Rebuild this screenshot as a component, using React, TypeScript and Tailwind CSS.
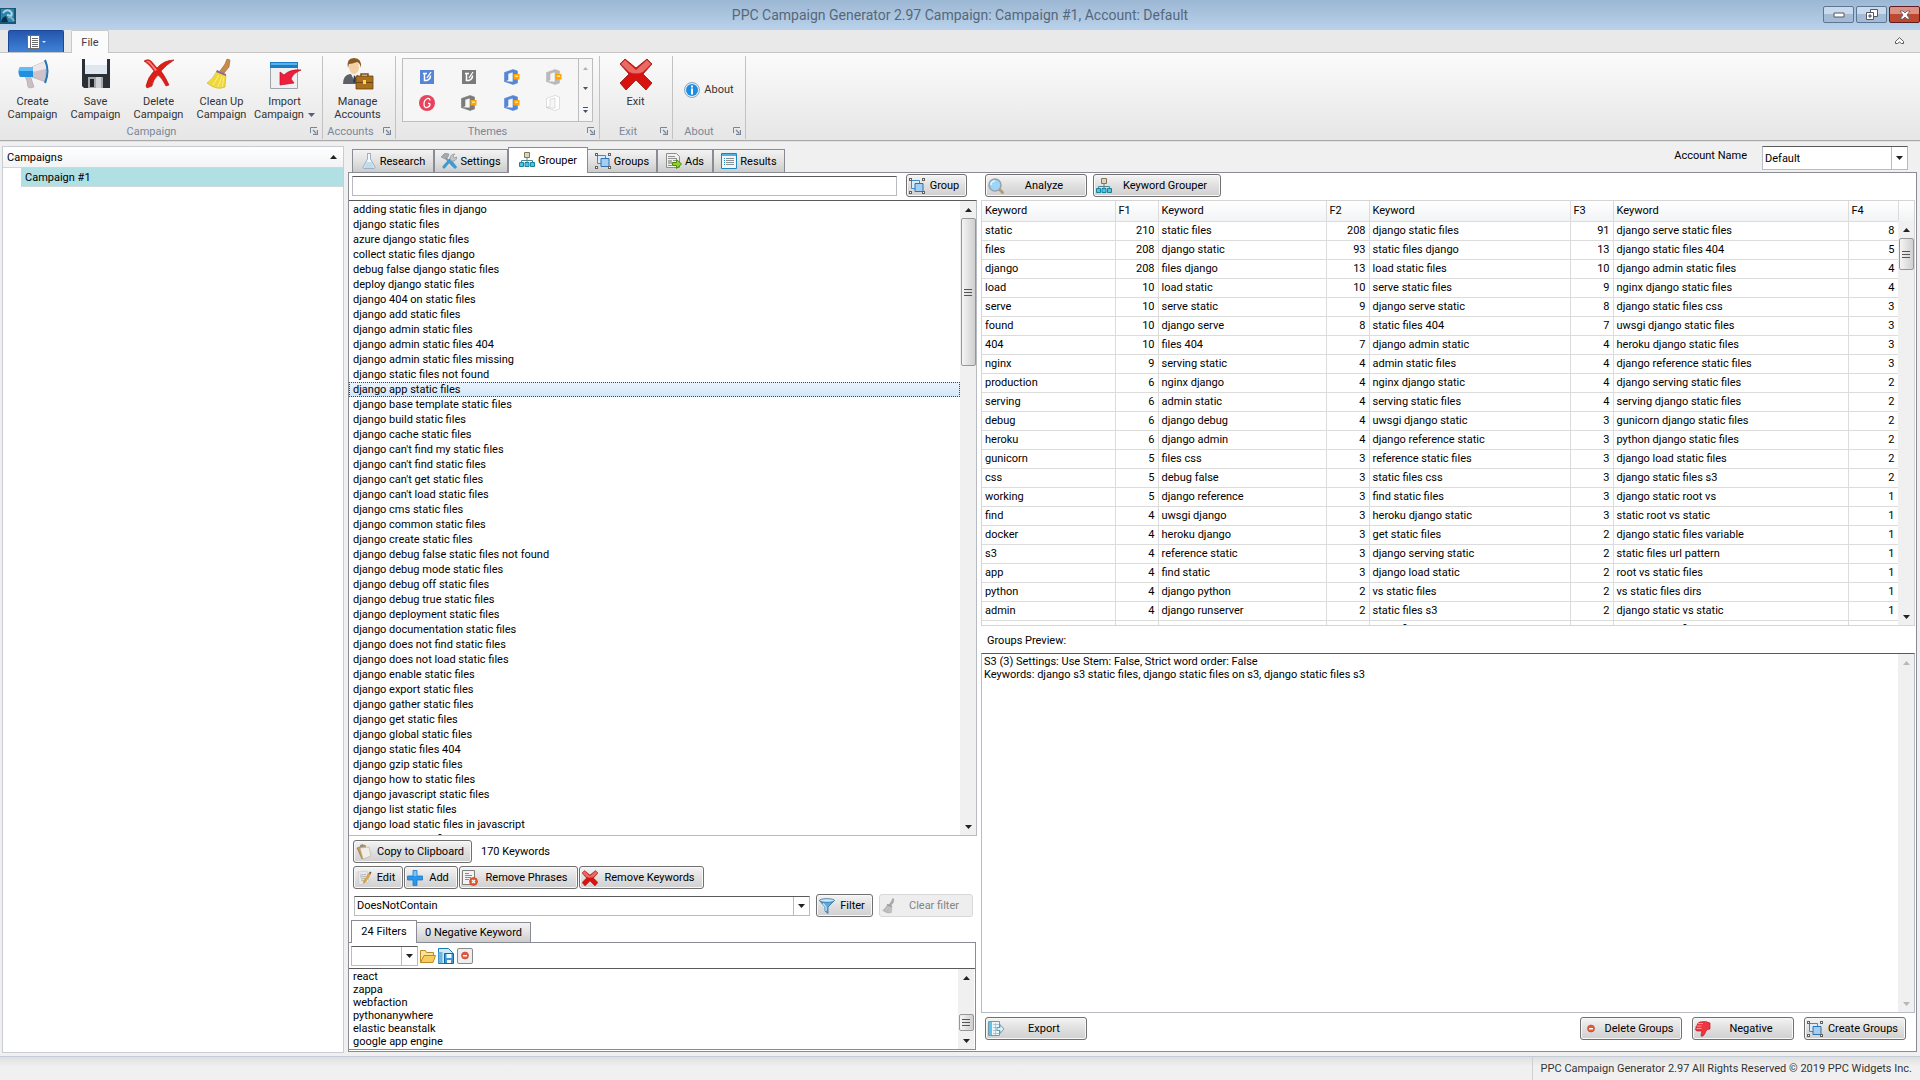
import type { ReactNode } from "react";

const keywords = [
  "adding static files in django",
  "django static files",
  "azure django static files",
  "collect static files django",
  "debug false django static files",
  "deploy django static files",
  "django 404 on static files",
  "django add static files",
  "django admin static files",
  "django admin static files 404",
  "django admin static files missing",
  "django static files not found",
  "django app static files",
  "django base template static files",
  "django build static files",
  "django cache static files",
  "django can't find my static files",
  "django can't find static files",
  "django can't get static files",
  "django can't load static files",
  "django cms static files",
  "django common static files",
  "django create static files",
  "django debug false static files not found",
  "django debug mode static files",
  "django debug off static files",
  "django debug true static files",
  "django deployment static files",
  "django documentation static files",
  "django does not find static files",
  "django does not load static files",
  "django enable static files",
  "django export static files",
  "django gather static files",
  "django get static files",
  "django global static files",
  "django static files 404",
  "django gzip static files",
  "django how to static files",
  "django javascript static files",
  "django list static files",
  "django load static files in javascript",
  "django load your files on model",
];

type Row = [string, number, string, number, string, number, string, number];

const rows: Row[] = [
  ["static", 210, "static files", 208, "django static files", 91, "django serve static files", 8],
  ["files", 208, "django static", 93, "static files django", 13, "django static files 404", 5],
  ["django", 208, "files django", 13, "load static files", 10, "django admin static files", 4],
  ["load", 10, "load static", 10, "serve static files", 9, "nginx django static files", 4],
  ["serve", 10, "serve static", 9, "django serve static", 8, "django static files css", 3],
  ["found", 10, "django serve", 8, "static files 404", 7, "uwsgi django static files", 3],
  ["404", 10, "files 404", 7, "django admin static", 4, "heroku django static files", 3],
  ["nginx", 9, "serving static", 4, "admin static files", 4, "django reference static files", 3],
  ["production", 6, "nginx django", 4, "nginx django static", 4, "django serving static files", 2],
  ["serving", 6, "admin static", 4, "serving static files", 4, "serving django static files", 2],
  ["debug", 6, "django debug", 4, "uwsgi django static", 3, "gunicorn django static files", 2],
  ["heroku", 6, "django admin", 4, "django reference static", 3, "python django static files", 2],
  ["gunicorn", 5, "files css", 3, "reference static files", 3, "django load static files", 2],
  ["css", 5, "debug false", 3, "static files css", 3, "django static files s3", 2],
  ["working", 5, "django reference", 3, "find static files", 3, "django static root vs", 1],
  ["find", 4, "uwsgi django", 3, "heroku django static", 3, "static root vs static", 1],
  ["docker", 4, "heroku django", 3, "get static files", 2, "django static files variable", 1],
  ["s3", 4, "reference static", 3, "django serving static", 2, "static files url pattern", 1],
  ["app", 4, "find static", 3, "django load static", 2, "root vs static files", 1],
  ["python", 4, "django python", 2, "vs static files", 2, "vs static files dirs", 1],
  ["admin", 4, "django runserver", 2, "static files s3", 2, "django static vs static", 1],
  ["mysql", 3, "common areas", 2, "nginx files django", 2, "django nginx files django", 1],
];

const filters = ["react", "zappa", "webfaction", "pythonanywhere", "elastic beanstalk", "google app engine"];

/* ---------- large ribbon icons ---------- */

function MegaphoneIcon() {
  return (
    <svg viewBox="0 0 32 32" className="size-8">
      <path d="M8 18l5-1 4 12-4 1-2-1-1-6z" fill="#c9bfc6" stroke="#a89ea6" strokeWidth=".6" />
      <path d="M15 9L29 3v21L15 19z" fill="#cfc2c9" stroke="#a99da5" strokeWidth=".6" />
      <path d="M15 9L29 3v8L15 14z" fill="#efe6e9" />
      <path d="M16 9v10H3q-3-5 0-10z" fill="#1f8fe0" />
      <path d="M16 9v4H2q0-2 1-4z" fill="#62bdf5" />
      <path d="M28 2q5 11 0 23" fill="none" stroke="#2378b8" strokeWidth="2" />
    </svg>
  );
}

function FloppyIcon() {
  return (
    <svg viewBox="0 0 32 32" className="size-8">
      <path d="M2 1h28v29H4l-2-2z" fill="#2b2f36" />
      <path d="M5 1h22v15H5z" fill="#dfe6f0" />
      <path d="M5 1h22v6H5z" fill="#f8faff" />
      <path d="M8 19h15v11H8z" fill="#a4a8ac" />
      <path d="M10 21h4v8h-4z" fill="#22252b" />
      <path d="M16 19h5v11h-5z" fill="#cfd2d5" />
    </svg>
  );
}

function RedCrossIcon() {
  return (
    <svg viewBox="0 0 32 32" className="size-8">
      <path d="M1 3q5-3 8 1l5 6q7-8 17-8-8 5-13 11 4 5 8 14l-3 1q-4-8-8-11-5 5-6 11l-5 2-1-2q2-9 8-15Q6 6 1 3z" fill="#dc2018" stroke="#b50f0a" strokeWidth=".6" />
      <path d="M3 3q3-1 5 2l6 7-2 1Q8 6 3 3z" fill="#f58a80" />
    </svg>
  );
}

function BroomIcon({ gray = false, small = false }: { gray?: boolean; small?: boolean }) {
  return (
    <svg viewBox="0 0 32 32" className={small ? "size-4" : "size-8"}>
      <path d="M21 1l3 1-1 7-5 6-4-2 5-7z" fill={gray ? "#aaaaaa" : "#c98a4b"} stroke={gray ? "#999999" : "#9a6230"} strokeWidth=".6" />
      <path d="M11 13l9 4-1 12q-8 4-18-4 6-4 10-12z" fill={gray ? "#b9b9b9" : "#efd93a"} stroke={gray ? "#a0a0a0" : "#cdb424"} strokeWidth=".6" />
      <path d="M11 12l9 4v2l-10-4z" fill={gray ? "#8d8d8d" : "#8d6a8f"} />
      <path d="M13 17l-6 10M16 18l-4 11M18 19l-2 10" stroke={gray ? "#d0d0d0" : "#fbf08c"} strokeWidth="1" />
    </svg>
  );
}

function ImportIcon() {
  return (
    <svg viewBox="0 0 32 32" className="size-8">
      <path d="M1.5 4.5h27v26h-27z" fill="#eef0f1" stroke="#9fa6ab" />
      <path d="M1 4h28v6H1z" fill="#1c7cc4" />
      <path d="M2 5h26v2H2z" fill="#58b2ea" />
      <path d="M11 27V14l4 3q6-6 17-5-8 3-10 9l3 4z" fill="#ee1f3c" stroke="#bb1029" strokeWidth=".7" />
    </svg>
  );
}

function ManagerIcon() {
  return (
    <svg viewBox="0 0 32 32" className="size-8">
      <path d="M1 26q0-9 7-10l8 1 3 9z" fill="#5d6167" />
      <path d="M9 16l3 6 4-6z" fill="#f4f4f4" />
      <path d="M12 17l2 3-1 5-2-1z" fill="#2e3a4f" />
      <ellipse cx="12" cy="9" rx="5" ry="7" fill="#f2cfa4" />
      <path d="M6 10Q4 0 12 0t7 10q-1-5-4-6-5 2-8 2z" fill="#8a5a26" />
      <path d="M19 19v-3h7v3" fill="none" stroke="#7a4c14" strokeWidth="1.5" />
      <path d="M14 18h17v13H14z" fill="#a8701f" stroke="#6c430e" strokeWidth=".8" />
      <path d="M14 24h17v1H14z" fill="#6c430e" />
      <path d="M21 22h3v4h-3z" fill="#ffd84a" />
    </svg>
  );
}

function ExitIcon({ small = false }: { small?: boolean }) {
  return (
    <svg viewBox="0 0 32 32" className={small ? "size-4" : "size-8"}>
      <path d="M5 1l11 9L27 1l5 5-9 10 9 9-6 7-10-10L6 32l-6-7 9-9L0 6z" fill="#d8130f" stroke="#8f1512" strokeWidth=".8" />
      <path d="M5 2l11 10L27 2l4 4-8 8q-7 3-14 0L1 6z" fill="#e96b66" />
    </svg>
  );
}

function InfoIcon() {
  return (
    <svg viewBox="0 0 16 16" className="size-4">
      <circle cx="8" cy="8" r="7.5" fill="#e4eef6" stroke="#8fa6b8" />
      <circle cx="8" cy="8" r="6" fill="#1c8de0" />
      <path d="M7 3.500h2v2H7zM7 6.500h2v6H7z" fill="#ffffff" />
    </svg>
  );
}

/* ---------- 16px icons ---------- */

function FlaskIcon() {
  return (
    <svg viewBox="0 0 16 16" className="size-4">
      <path d="M6 .5h4M6.500 1v5L2 14q0 1.500 1 1.500h10q1 0 1-1.500L9.500 6V1" fill="#f3f8fb" stroke="#9db0bf" />
      <path d="M5.500 9L3 14q0 1 1 1h8l1-1-2.500-5z" fill="#c0dcec" />
    </svg>
  );
}

function ToolsIcon() {
  return (
    <svg viewBox="0 0 16 16" className="size-4">
      <path d="M2 2l10 11" stroke="#8d9499" strokeWidth="2" />
      <path d="M0 4l4-4 4 1-1 3-3 2-2-1z" fill="#a4a9ad" stroke="#7f868b" strokeWidth=".5" />
      <path d="M3 14l6-7" stroke="#3a9bd6" strokeWidth="3" strokeLinecap="round" />
      <path d="M10 9l4 5" stroke="#3a9bd6" strokeWidth="3.5" strokeLinecap="round" />
      <path d="M9 6q0-5 5-5l-2 2 1 2 3-1q-1 5-6 4z" fill="#c3c8cc" stroke="#7f868b" strokeWidth=".6" />
    </svg>
  );
}

function TreeIcon() {
  return (
    <svg viewBox="0 0 16 16" className="size-4">
      <path d="M8 6v5M2.500 11V8.500h11V11" fill="none" stroke="#4c8796" />
      <path d="M5.500.5h5v5h-5z" fill="#e0d3bd" stroke="#85775f" />
      <path d="M.5 10.500h4v4h-4zM6 10.500h4v4H6zM11.500 10.500h4v4h-4z" fill="#4fc4e4" stroke="#17829e" />
    </svg>
  );
}

function GroupIcon() {
  return (
    <svg viewBox="0 0 16 16" className="size-4">
      <path d="M2.500 2.500h8v8h-8z" fill="#dcebf8" stroke="#4489c4" />
      <path d="M6 5.500h8v8H6z" fill="#a5cdf0" stroke="#2c72b4" />
      <path d="M0 0h3v3H0zM13 0h3v3h-3zM0 13h3v3H0zM13 13h3v3h-3z" fill="#65605c" />
      <path d="M1 1h1v1H1zM14 1h1v1h-1zM1 14h1v1H1zM14 14h1v1h-1z" fill="#ffffff" />
    </svg>
  );
}

function AdsIcon() {
  return (
    <svg viewBox="0 0 16 16" className="size-4">
      <path d="M.5.5h10l3 3v11H.5z" fill="#f1f1f1" stroke="#8d8d8d" />
      <path d="M2 3.500h7M2 5.500h9M7 7.500h4M2 12.500h4" stroke="#8f8f8f" />
      <path d="M2 7h4v4H2z" fill="#a9b0a5" />
      <path d="M6.500 9.500h4v-3l5 4.500-5 4.500v-3h-4z" fill="#94d124" stroke="#4c8a0c" />
    </svg>
  );
}

function ResultsIcon() {
  return (
    <svg viewBox="0 0 16 16" className="size-4">
      <path d="M.5.5h15v15H.5z" fill="#f4f7f9" stroke="#1d86c0" />
      <path d="M1 1h14v2H1z" fill="#4eb1e4" />
      <path d="M3 5.500h1M3 7.500h1M3 9.500h1M3 11.500h1" stroke="#1d86c0" />
      <path d="M5 5.500h8M5 7.500h8M5 9.500h8M5 11.500h8" stroke="#8a8f94" />
    </svg>
  );
}

function MagnifierIcon() {
  return (
    <svg viewBox="0 0 16 16" className="size-4">
      <path d="M11 11l3.500 3.500" stroke="#b99b72" strokeWidth="3" strokeLinecap="round" />
      <circle cx="7" cy="7" r="6" fill="#9bd5f8" stroke="#98a1aa" strokeWidth="1.5" />
      <path d="M3 7q0-4 4-4" fill="none" stroke="#e3f4ff" strokeWidth="1.5" />
    </svg>
  );
}

function ClipboardIcon() {
  return (
    <svg viewBox="0 0 16 16" className="size-4">
      <path d="M1 4l8-3 3 10-6 4z" fill="#c79a5c" stroke="#957043" strokeWidth=".6" />
      <path d="M4 4l9-1 2 9-8 3z" fill="#f1eee5" stroke="#b4ae9f" strokeWidth=".6" />
      <path d="M4 1l3-1 1 2-4 1z" fill="#8f8f8f" />
    </svg>
  );
}

function EditIcon() {
  return (
    <svg viewBox="0 0 16 16" className="size-4">
      <path d="M2 2l9-1 2 11-10 3z" fill="#e9e9e9" stroke="#c2c2c2" strokeWidth=".6" />
      <path d="M4 5l6-.5M4 7l6-.5M5 9l4-.5M5 11l3-.5" stroke="#a6a6a6" strokeWidth=".8" />
      <path d="M13 3l1.500 1-5 8-2 1 .5-2z" fill="#f0b23c" stroke="#a96f14" strokeWidth=".5" />
      <path d="M13 3l1-1.500 1.500 1-1 1.500z" fill="#5a5a5a" />
    </svg>
  );
}

function PlusIcon() {
  return (
    <svg viewBox="0 0 16 16" className="size-4">
      <path d="M6 .5h4V6h5.500v4H10v5.500H6V10H.5V6H6z" fill="#2b97ea" stroke="#1b78c8" strokeWidth=".8" />
      <path d="M6.500 1h3v5h-3z" fill="#7cc5f8" />
    </svg>
  );
}

function RemovePhraseIcon() {
  return (
    <svg viewBox="0 0 16 16" className="size-4">
      <path d="M.5.5h12v14H.5z" fill="#f2f2f2" stroke="#7f7f7f" />
      <path d="M3 3.500h4M3 5.500h7M3 7.500h6M3 9.500h4" stroke="#8c8c8c" />
      <circle cx="11.5" cy="11.5" r="4" fill="#e7592a" stroke="#b63a14" strokeWidth=".6" />
      <path d="M10 10l3 3M13 10l-3 3" stroke="#ffffff" strokeWidth="1.3" />
    </svg>
  );
}

function FunnelIcon() {
  return (
    <svg viewBox="0 0 16 16" className="size-4">
      <path d="M.5 2.500L6 9v4l3 2.500V9l6.500-6.500z" fill="#58abe2" stroke="#2c6f9f" strokeWidth=".8" />
      <ellipse cx="8" cy="2.5" rx="7.5" ry="1.8" fill="#cfe9fa" stroke="#2c6f9f" strokeWidth=".8" />
      <path d="M4 5.500l3 3.500v4" fill="none" stroke="#c8e6f9" strokeWidth="1.2" />
    </svg>
  );
}

function FolderIcon() {
  return (
    <svg viewBox="0 0 16 16" className="size-4">
      <path d="M.5 14.500v-12h5l1 2h7v3" fill="#f9e29a" stroke="#b98b28" />
      <path d="M.5 14.500L4 7.500h11.500L13 14.500z" fill="#f6cb5f" stroke="#b98b28" />
    </svg>
  );
}

function SaveSheetIcon() {
  return (
    <svg viewBox="0 0 16 16" className="size-4">
      <path d="M.5.5h10l4 4v11H.5z" fill="#cfe8f7" stroke="#1a7bb4" />
      <path d="M.5 4h4v11h-4z" fill="#6bb7e0" />
      <path d="M6.500 5.500h9v10h-9z" fill="#3a98d3" stroke="#13659a" />
      <path d="M8.500 6h5v4h-5zM9 12h4v3H9z" fill="#eef8fe" />
    </svg>
  );
}

function MinusDotIcon() {
  return (
    <svg viewBox="0 0 16 16" className="size-4">
      <circle cx="8" cy="7.5" r="3.5" fill="#e9573a" stroke="#b5432c" strokeWidth=".6" />
      <path d="M6 7h4v1.500H6z" fill="#ffffff" />
    </svg>
  );
}

function ExportIcon() {
  return (
    <svg viewBox="0 0 16 16" className="size-4">
      <path d="M.5.5h11v14H.5z" fill="#eaf6fc" stroke="#7e98a6" />
      <path d="M1 1h3v13H1z" fill="#5cc3ec" />
      <path d="M5 3.500h6M5 6.500h6M5 9.500h6M5 12.500h6M7.500 2v12" stroke="#9bbccc" strokeWidth=".8" />
      <path d="M9 6.500h3v-3l4 4.500-4 4.500v-3H9z" fill="#d6f0f8" stroke="#5b8ea3" strokeWidth=".8" />
    </svg>
  );
}

function ThumbDownIcon() {
  return (
    <svg viewBox="0 0 16 16" className="size-4">
      <path d="M5 1q6-1.500 10 1v6q-3 0-4 2-1 3-3 5-2 1-2-1l1-4H2Q-.5 9 1 7 .5 5 2 4.500 2 2 5 1z" fill="#ee3540" stroke="#b81b27" strokeWidth=".7" />
      <path d="M3 2.500h5M1.500 5h5M1.500 7.500h5" stroke="#ff9a9f" strokeWidth=".9" />
    </svg>
  );
}

/* ---------- theme thumbnails ---------- */

function NoteTheme({ fill }: { fill: string }) {
  return (
    <svg viewBox="0 0 16 16" className="size-4">
      <path d="M1 1h14v14H1z" fill={fill} />
      <path d="M4 4.500h4M5.500 4.500v7h2q4-1 4-5" fill="none" stroke="#ffffff" strokeWidth="1.5" />
      <path d="M8 9l4-6" stroke="#ffffff" strokeWidth="1.3" />
    </svg>
  );
}

function OfficeTheme({ fill, badge = true }: { fill: string; badge?: boolean }) {
  return (
    <svg viewBox="0 0 16 16" className="size-4">
      <path d="M.5 3.500L9 .5l4.500 1.500v12L9 15.500l-8.500-3L9 13V3L4 4.500v6.500l-3.500 1.500z" fill={badge ? fill : "#ffffff"} stroke={fill} strokeWidth=".6" />
      {badge && <path d="M9.500 5h6v5.500h-6z" fill="#ffa400" />}
      {badge && <path d="M11 6.500h3v1.500h-3z" fill="#ffe3a6" />}
    </svg>
  );
}

function RoundTheme() {
  return (
    <svg viewBox="0 0 16 16" className="size-4">
      <circle cx="8" cy="8" r="8" fill="#e8435c" />
      <path d="M11 5.500q0-2.500-2.500-2Q5 5 5 9q0 4 3 3.500 3-1 3-3 0-1.500-2-1" fill="none" stroke="#ffffff" strokeWidth="1.3" />
    </svg>
  );
}

/* ---------- shared pieces ---------- */

function Arrow({ up = false, muted = false }: { up?: boolean; muted?: boolean }) {
  return (
    <svg viewBox="0 0 7 4" className={`h-1 w-[7px] ${muted ? "text-[#b8b8b8]" : "text-[#222222]"}`}>
      <path d={up ? "M0 4L3.500 0 7 4z" : "M0 0L3.500 4 7 0z"} fill="currentColor" />
    </svg>
  );
}

function Push({
  icon,
  children,
  className = "",
  disabled,
}: {
  icon: ReactNode;
  children: ReactNode;
  className?: string;
  disabled?: boolean;
}) {
  const look = disabled
    ? "border-[#d8d8d8] bg-[#eeeeee] text-[#838383]"
    : "border-[#707070] bg-linear-to-b from-[#f4f4f4] from-0% via-[#dedede] via-55% to-[#d0d0d0] text-black shadow-[inset_0_0_0_1px_#f8f8f8]";
  return (
    <button disabled={disabled} className={`flex h-[23px] shrink-0 items-center rounded-[3px] border px-[2px] ${look} ${className}`}>
      {icon}
      <span className="flex-1 text-center whitespace-nowrap">{children}</span>
    </button>
  );
}

function Tab({
  icon,
  children,
  selected,
  className = "",
}: {
  icon?: ReactNode;
  children: ReactNode;
  selected?: boolean;
  className?: string;
}) {
  const look = selected
    ? "z-10 -mb-px bg-white pb-px"
    : "mt-[2px] bg-linear-to-b from-[#f3f3f3] from-0% via-[#e2e2e2] via-50% to-[#cccccc]";
  return (
    <button
      role="tab"
      aria-selected={!!selected}
      className={`relative flex items-center justify-center gap-[3px] border border-b-0 border-[#898c95] whitespace-nowrap ${look} ${className}`}
    >
      {icon}
      {children}
    </button>
  );
}

function ScrollBar({ before, thumb }: { before?: string; thumb?: string }) {
  const muted = !thumb;
  return (
    <div className="flex w-4 shrink-0 flex-col items-center bg-[#f0f0f0]">
      <div className="flex h-[17px] shrink-0 items-center">
        <Arrow up muted={muted} />
      </div>
      <div className={before} />
      {thumb && (
        <div className={`flex w-[15px] shrink-0 flex-col items-center justify-center gap-[2px] rounded-[2px] border border-[#979797] bg-linear-to-r from-[#f5f5f5] to-[#cfcfcf] ${thumb}`}>
          <div className="h-px w-2 bg-[#555555]" />
          <div className="h-px w-2 bg-[#555555]" />
          <div className="h-px w-2 bg-[#555555]" />
        </div>
      )}
      <div className="flex-1" />
      <div className="flex h-[17px] shrink-0 items-center">
        <Arrow muted={muted} />
      </div>
    </div>
  );
}

function Combo({ label, value, className = "" }: { label: string; value: string; className?: string }) {
  return (
    <div className={`relative flex border border-[#b8bcc2] border-t-[#5a5a5a] bg-white ${className}`}>
      <select aria-label={label} className="min-w-0 flex-1 appearance-none bg-transparent px-[2px] outline-none">
        <option>{value}</option>
      </select>
      <div className="pointer-events-none flex w-4 items-center justify-center border-l border-[#b8bcc2]">
        <Arrow />
      </div>
    </div>
  );
}

function LaunchIcon() {
  return (
    <svg viewBox="0 0 8 8" className="size-2">
      <path d="M.5 6V.5H7" fill="none" stroke="#76859a" />
      <path d="M3 3l3 3M7.500 3v4.500H3" fill="none" stroke="#76859a" strokeWidth="1.3" />
    </svg>
  );
}

function RibbonGroup({ caption, className = "", children }: { caption: string; className?: string; children: ReactNode }) {
  return (
    <section className={`flex flex-col border-r border-[#c2c2c2] ${className}`}>
      <div className="flex flex-1">{children}</div>
      <div className="flex h-4 items-center pr-1 text-[#78879b]">
        <span className="flex-1 pr-2 text-center">{caption}</span>
        <button aria-label={`${caption} options`}>
          <LaunchIcon />
        </button>
      </div>
    </section>
  );
}

function RibbonButton({ icon, lines, menu }: { icon: ReactNode; lines: string[]; menu?: boolean }) {
  return (
    <button className="flex w-[63px] flex-col items-center pt-[2px] leading-[13px] text-[#333333]">
      {icon}
      <span className="mt-[5px]">{lines[0]}</span>
      {lines[1] && (
        <span className="flex items-center gap-1">
          {lines[1]}
          {menu && (
            <svg viewBox="0 0 7 4" className="h-1 w-[7px]">
              <path d="M0 0L3.500 4 7 0z" fill="#53617a" />
            </svg>
          )}
        </span>
      )}
    </button>
  );
}

/* ---------- regions ---------- */

function TitleBar() {
  return (
    <header className="flex h-[30px] shrink-0 bg-linear-to-b from-[#9cb7d3] to-[#bad2eb]">
      <div className="w-[100px] pt-2">
        <svg viewBox="0 0 16 16" className="size-4">
          <path d="M0 0h16v16H0z" fill="#14597c" />
          <path d="M1 1h13v13H1z" fill="#2389b4" />
          <path d="M3 5q3-4 7-2 3 2 1 5l-4-1" fill="none" stroke="#b4d3de" strokeWidth="2" />
          <path d="M8 9q4 0 6 4" fill="none" stroke="#8ea9b5" strokeWidth="2" />
          <path d="M1 14q1-5 5-6l2 6z" fill="#0d2f45" />
        </svg>
      </div>
      <h1 className="flex-1 text-center text-sm leading-[30px] text-[#56677a]">
        PPC Campaign Generator 2.97 Campaign: Campaign #1, Account: Default
      </h1>
      <div className="flex w-[100px] justify-end gap-[2px] pt-[6px]">
        <button aria-label="Minimize" className="flex h-[17px] w-[31px] items-center justify-center rounded-[2px] border border-[#5d7694] bg-linear-to-b from-[#c9daec] from-50% to-[#a3bbd5] to-50%">
          <svg viewBox="0 0 12 6" className="h-[6px] w-3">
            <path d="M1 1h10v4H1z" fill="#ffffff" stroke="#535666" />
          </svg>
        </button>
        <button aria-label="Restore" className="flex h-[17px] w-[31px] items-center justify-center rounded-[2px] border border-[#5d7694] bg-linear-to-b from-[#c9daec] from-50% to-[#a3bbd5] to-50%">
          <svg viewBox="0 0 12 12" className="size-3">
            <path d="M4.500.5h7v7h-7z" fill="#ffffff" stroke="#535666" />
            <path d="M.5 3.500h7v7h-7z" fill="#ffffff" stroke="#535666" />
            <path d="M3 6h2v2H3z" fill="#a3bbd5" stroke="#535666" />
          </svg>
        </button>
        <button aria-label="Close" className="flex h-[17px] w-[31px] items-center justify-center rounded-[2px] border border-[#5e1d20] bg-linear-to-b from-[#dd9184] from-50% to-[#bd4a30] to-50%">
          <svg viewBox="0 0 12 10" className="h-[10px] w-3">
            <path d="M1 1h3l2 2 2-2h3L8 5l3 4H8L6 7 4 9H1l3-4z" fill="#ffffff" stroke="#535666" strokeWidth=".8" />
          </svg>
        </button>
      </div>
    </header>
  );
}

function Ribbon() {
  return (
    <>
      <nav className="flex h-[23px] shrink-0 border-b border-[#c3c3c3] bg-[#e9e9e9] pl-2">
        <button aria-label="Application menu" className="flex h-[22px] w-14 items-center justify-center gap-[2px] rounded-t-[2px] border border-b-0 border-[#1c479a] bg-linear-to-b from-[#2456ac] to-[#3f83d8]">
          <svg viewBox="0 0 13 14" className="h-[14px] w-[13px]">
            <path d="M.5.5h12v13H.5z" fill="#ffffff" stroke="#6c6c6c" />
            <path d="M3.500 1v12M5 3.500h6M5 5.500h6M5 7.500h6M5 9.500h6M5 11.500h6" stroke="#6c6c6c" />
          </svg>
          <svg viewBox="0 0 4 2" className="h-[2px] w-1">
            <path d="M0 0h4L2 2z" fill="#dfe8f5" />
          </svg>
        </button>
        <button role="tab" aria-selected className="z-10 -mb-px ml-[7px] h-[23px] w-[38px] rounded-t-[2px] border border-b-0 border-[#c9c9c9] bg-[#fbfbfb] text-[#3b3b4b]">
          File
        </button>
        <div className="flex-1" />
        <button aria-label="Collapse ribbon" className="mr-4">
          <svg viewBox="0 0 9 8" className="h-2 w-[9px]">
            <path d="M.5 4.500L4.500.7l4 3.800v2H6.500L4.500 5l-2 1.500h-2z" fill="#ffffff" stroke="#555555" />
          </svg>
        </button>
      </nav>
      <div className="flex h-[88px] shrink-0 border-b border-[#a9a9a9] bg-linear-to-b from-[#fbfbfb] to-[#e6e6e6] pt-[3px] pb-px">
        <RibbonGroup caption="Campaign" className="w-[323px] pl-px">
          <RibbonButton icon={<MegaphoneIcon />} lines={["Create", "Campaign"]} />
          <RibbonButton icon={<FloppyIcon />} lines={["Save", "Campaign"]} />
          <RibbonButton icon={<RedCrossIcon />} lines={["Delete", "Campaign"]} />
          <RibbonButton icon={<BroomIcon />} lines={["Clean Up", "Campaign"]} />
          <RibbonButton icon={<ImportIcon />} lines={["Import", "Campaign"]} menu />
        </RibbonGroup>
        <RibbonGroup caption="Accounts" className="w-[73px] pl-[3px]">
          <RibbonButton icon={<ManagerIcon />} lines={["Manage", "Accounts"]} />
        </RibbonGroup>
        <RibbonGroup caption="Themes" className="w-[204px]">
          <div className="mx-[6px] mt-[2px] flex h-16 flex-1 border border-[#bdbdbd] bg-[#f6f6f6]">
            <div className="grid flex-1 grid-cols-4 content-center justify-items-center gap-y-[10px] px-[3px]">
              <NoteTheme fill="#5585d6" />
              <NoteTheme fill="#7b7b7b" />
              <OfficeTheme fill="#5585d6" />
              <OfficeTheme fill="#b9b9b9" />
              <RoundTheme />
              <OfficeTheme fill="#7b7b7b" />
              <OfficeTheme fill="#5585d6" />
              <OfficeTheme fill="#c9c9c9" badge={false} />
            </div>
            <div className="flex w-[14px] flex-col items-center justify-around border-l border-[#bdbdbd]">
              <svg viewBox="0 0 5 3" className="h-[3px] w-[5px]"><path d="M0 3h5L2.500 0z" fill="#a9b2be" /></svg>
              <svg viewBox="0 0 5 3" className="h-[3px] w-[5px]"><path d="M0 0h5L2.500 3z" fill="#46546b" /></svg>
              <svg viewBox="0 0 5 6" className="h-[6px] w-[5px]"><path d="M0 0h5v1H0zM0 3h5L2.500 6z" fill="#46546b" /></svg>
            </div>
          </div>
        </RibbonGroup>
        <RibbonGroup caption="Exit" className="w-[73px] pl-1">
          <RibbonButton icon={<ExitIcon />} lines={["Exit"]} />
        </RibbonGroup>
        <RibbonGroup caption="About" className="w-[73px]">
          <button className="flex flex-1 items-center justify-center gap-1 text-[#333333]">
            <InfoIcon />
            About
          </button>
        </RibbonGroup>
      </div>
    </>
  );
}

function CampaignPanel() {
  return (
    <aside className="mt-1 mb-[3px] ml-[2px] w-[342px] shrink-0 border border-[#c9ccd2] bg-white">
      <div className="flex h-[21px] items-center justify-between border-b border-[#d5d5d5] bg-linear-to-b from-white to-[#f2f3f5] pr-[6px] pl-1">
        Campaigns
        <Arrow up />
      </div>
      <div className="ml-[18px] h-[19px] border-b border-[#d0d8da] bg-[#b0dfe4] pl-1 leading-[19px]">Campaign #1</div>
    </aside>
  );
}

function KeywordColumn() {
  return (
    <section className="flex w-[628px] shrink-0 flex-col">
      <div className="flex h-[27px] shrink-0 items-start gap-[9px] pt-[3px] pr-[10px] pl-[3px]">
        <input aria-label="Group keyword" className="h-5 min-w-0 flex-1 border border-[#b8bcc2] border-t-[#5a5a5a] bg-white px-1 outline-none" />
        <Push icon={<GroupIcon />} className="-mt-[2px] w-[61px]">Group</Push>
      </div>
      <div className="flex min-h-0 flex-1 border border-l-0 border-[#b8bcc2] border-t-[#5a5a5a]">
        <ul className="min-w-0 flex-1 overflow-hidden pt-px leading-[15px]">
          {keywords.map((k, i) => (
            <li key={k} className={i === 12 ? "bg-linear-to-b from-[#eaf3fc] to-[#d3e6f8] pl-[4px] outline-1 -outline-offset-1 outline-dotted outline-[#444444]" : "pl-[4px]"}>
              {k}
            </li>
          ))}
        </ul>
        <ScrollBar before="h-0" thumb="h-[148px]" />
      </div>
      <div className="mt-1 flex shrink-0 items-center gap-[9px] pl-1">
        <Push icon={<ClipboardIcon />} className="w-[119px]">Copy to Clipboard</Push>
        <span>170 Keywords</span>
      </div>
      <div className="mt-[3px] flex shrink-0 gap-px pl-1">
        <Push icon={<EditIcon />} className="w-[50px]">Edit</Push>
        <Push icon={<PlusIcon />} className="w-[54px]">Add</Push>
        <Push icon={<RemovePhraseIcon />} className="w-[119px]">Remove Phrases</Push>
        <Push icon={<ExitIcon small />} className="w-[125px]">Remove Keywords</Push>
      </div>
      <div className="mt-[5px] flex shrink-0 items-center gap-[6px] pr-[4px] pl-[5px]">
        <Combo label="Filter mode" value="DoesNotContain" className="h-5 flex-1" />
        <Push icon={<FunnelIcon />} className="w-[57px]">Filter</Push>
        <Push icon={<BroomIcon gray small />} className="w-[94px]" disabled>Clear filter</Push>
      </div>
      <div className="mt-[3px] flex h-[22px] shrink-0 pl-[2px]" role="tablist">
        <Tab selected className="w-[66px]">24 Filters</Tab>
        <Tab className="w-[114px] border-l-0">0 Negative Keyword</Tab>
      </div>
      <div className="mr-px mb-px flex h-[108px] shrink-0 flex-col border border-l-0 border-[#898c95]">
        <div className="flex h-[25px] shrink-0 items-center gap-[2px] pl-[2px]">
          <Combo label="Filter set" value="" className="h-5 w-[67px]" />
          <button aria-label="Open filters"><FolderIcon /></button>
          <button aria-label="Save filters"><SaveSheetIcon /></button>
          <button aria-label="Delete filter" className="ml-px rounded-[2px] bg-[#eeeeee] outline-1 -outline-offset-1 outline-[#8a8a8a]"><MinusDotIcon /></button>
        </div>
        <div className="flex min-h-0 flex-1 border-t border-[#5a5a5a] pr-px">
          <ul className="flex-1 overflow-hidden pt-px pl-[4px] leading-[13px]">
            {filters.map((f) => (
              <li key={f}>{f}</li>
            ))}
          </ul>
          <ScrollBar before="h-[28px]" thumb="h-[17px]" />
        </div>
      </div>
    </section>
  );
}

function KeywordTable() {
  return (
    <div className="flex h-[426px] shrink-0 flex-col border border-[#d5d5d5]">
      <div className="relative min-h-0 flex-1 overflow-hidden">
        <table className="w-full table-fixed border-collapse">
          <colgroup>
            <col className="w-[133px]" />
            <col className="w-[43px]" />
            <col className="w-[168px]" />
            <col className="w-[43px]" />
            <col className="w-[201px]" />
            <col className="w-[43px]" />
            <col />
            <col className="w-[50px]" />
            <col className="w-4" />
          </colgroup>
          <thead>
            <tr className="h-5 bg-linear-to-b from-white to-[#f2f3f5] text-left">
              {[1, 2, 3, 4].map((n) => [
                <th key={`k${n}`} className="border-r border-b border-[#dcdcdc] p-0 pl-[3px] font-normal">Keyword</th>,
                <th key={`f${n}`} className="border-r border-b border-[#dcdcdc] p-0 pl-[3px] font-normal">{`F${n}`}</th>,
              ])}
              <th className="border-b border-[#dcdcdc] p-0" />
            </tr>
          </thead>
          <tbody>
            {rows.map((r) => (
              <tr key={r[0]} className="h-[19px]">
                {r.map((cell, i) => (
                  <td
                    key={i}
                    className={`border-r border-b border-[#dcdcdc] p-0 whitespace-nowrap ${i % 2 ? "pr-[3px] text-right" : "pl-[3px]"}`}
                  >
                    {cell}
                  </td>
                ))}
                <td className="p-0" />
              </tr>
            ))}
          </tbody>
        </table>
        <div className="absolute top-5 right-0 bottom-0 flex">
          <ScrollBar before="h-0" thumb="h-8" />
        </div>
      </div>
    </div>
  );
}

function AnalysisColumn() {
  return (
    <section className="ml-[4px] flex min-w-0 flex-1 flex-col pr-px pb-[11px]">
      <div className="flex h-[27px] shrink-0 gap-[6px] pt-px pl-1">
        <Push icon={<MagnifierIcon />} className="w-[102px]">Analyze</Push>
        <Push icon={<TreeIcon />} className="w-[128px]">Keyword Grouper</Push>
      </div>
      <KeywordTable />
      <label htmlFor="preview" className="h-[27px] shrink-0 pl-[6px] leading-[29px]">Groups Preview:</label>
      <div className="flex min-h-0 flex-1 border border-[#b8bcc2] border-t-[#5a5a5a]">
        <textarea
          id="preview"
          readOnly
          className="min-w-0 flex-1 resize-none overflow-hidden px-[2px] pt-px leading-[13px] outline-none"
          value={"S3 (3) Settings: Use Stem: False, Strict word order: False\nKeywords: django s3 static files, django static files on s3, django static files s3"}
        />
        <ScrollBar />
      </div>
      <div className="mt-1 flex shrink-0 gap-[10px] pr-[9px] pl-1">
        <Push icon={<ExportIcon />} className="w-[102px]">Export</Push>
        <div className="flex-1" />
        <Push icon={<MinusDotIcon />} className="w-[102px]">Delete Groups</Push>
        <Push icon={<ThumbDownIcon />} className="w-[102px]">Negative</Push>
        <Push icon={<GroupIcon />} className="w-[102px]">Create Groups</Push>
      </div>
    </section>
  );
}

export default function App() {
  return (
    <div className="flex h-screen flex-col overflow-hidden bg-[#f0f0f0] font-[Roboto,Tahoma,sans-serif] text-[11px] leading-[13px] text-black">
      <TitleBar />
      <Ribbon />
      <main className="flex min-h-0 flex-1 border-t border-[#dfe3e8] bg-[#f0f0f0]">
        <CampaignPanel />
        <div className="mr-[3px] mb-[4px] ml-1 flex min-w-0 flex-1 flex-col">
          <div className="flex h-[30px] shrink-0 justify-between">
            <div className="flex pt-[5px] pl-1" role="tablist">
              <Tab icon={<FlaskIcon />} className="w-[82px]">Research</Tab>
              <Tab icon={<ToolsIcon />} className="w-[74px]">Settings</Tab>
              <Tab icon={<TreeIcon />} selected className="w-[80px]">Grouper</Tab>
              <Tab icon={<GroupIcon />} className="w-[69px] border-l-0">Groups</Tab>
              <Tab icon={<AdsIcon />} className="w-[56px]">Ads</Tab>
              <Tab icon={<ResultsIcon />} className="w-[72px]">Results</Tab>
            </div>
            <div className="flex items-start gap-[15px] pt-1 pr-[9px]">
              <span className="pt-[3px]">Account Name</span>
              <Combo label="Account Name" value="Default" className="h-6 w-[146px]" />
            </div>
          </div>
          <div className="flex min-h-0 flex-1 border border-[#898c95] bg-white">
            <KeywordColumn />
            <AnalysisColumn />
          </div>
        </div>
      </main>
      <footer className="flex h-6 shrink-0 justify-end border-t border-[#c3ccd6] bg-linear-to-b from-[#dfdfdf] to-[#f0f0f0] to-40%">
        <span className="border-l border-[#cfcfcf] pr-2 pl-2 leading-[24px] text-[#333333]">
          PPC Campaign Generator 2.97 All Rights Reserved © 2019 PPC Widgets Inc.
        </span>
      </footer>
    </div>
  );
}
